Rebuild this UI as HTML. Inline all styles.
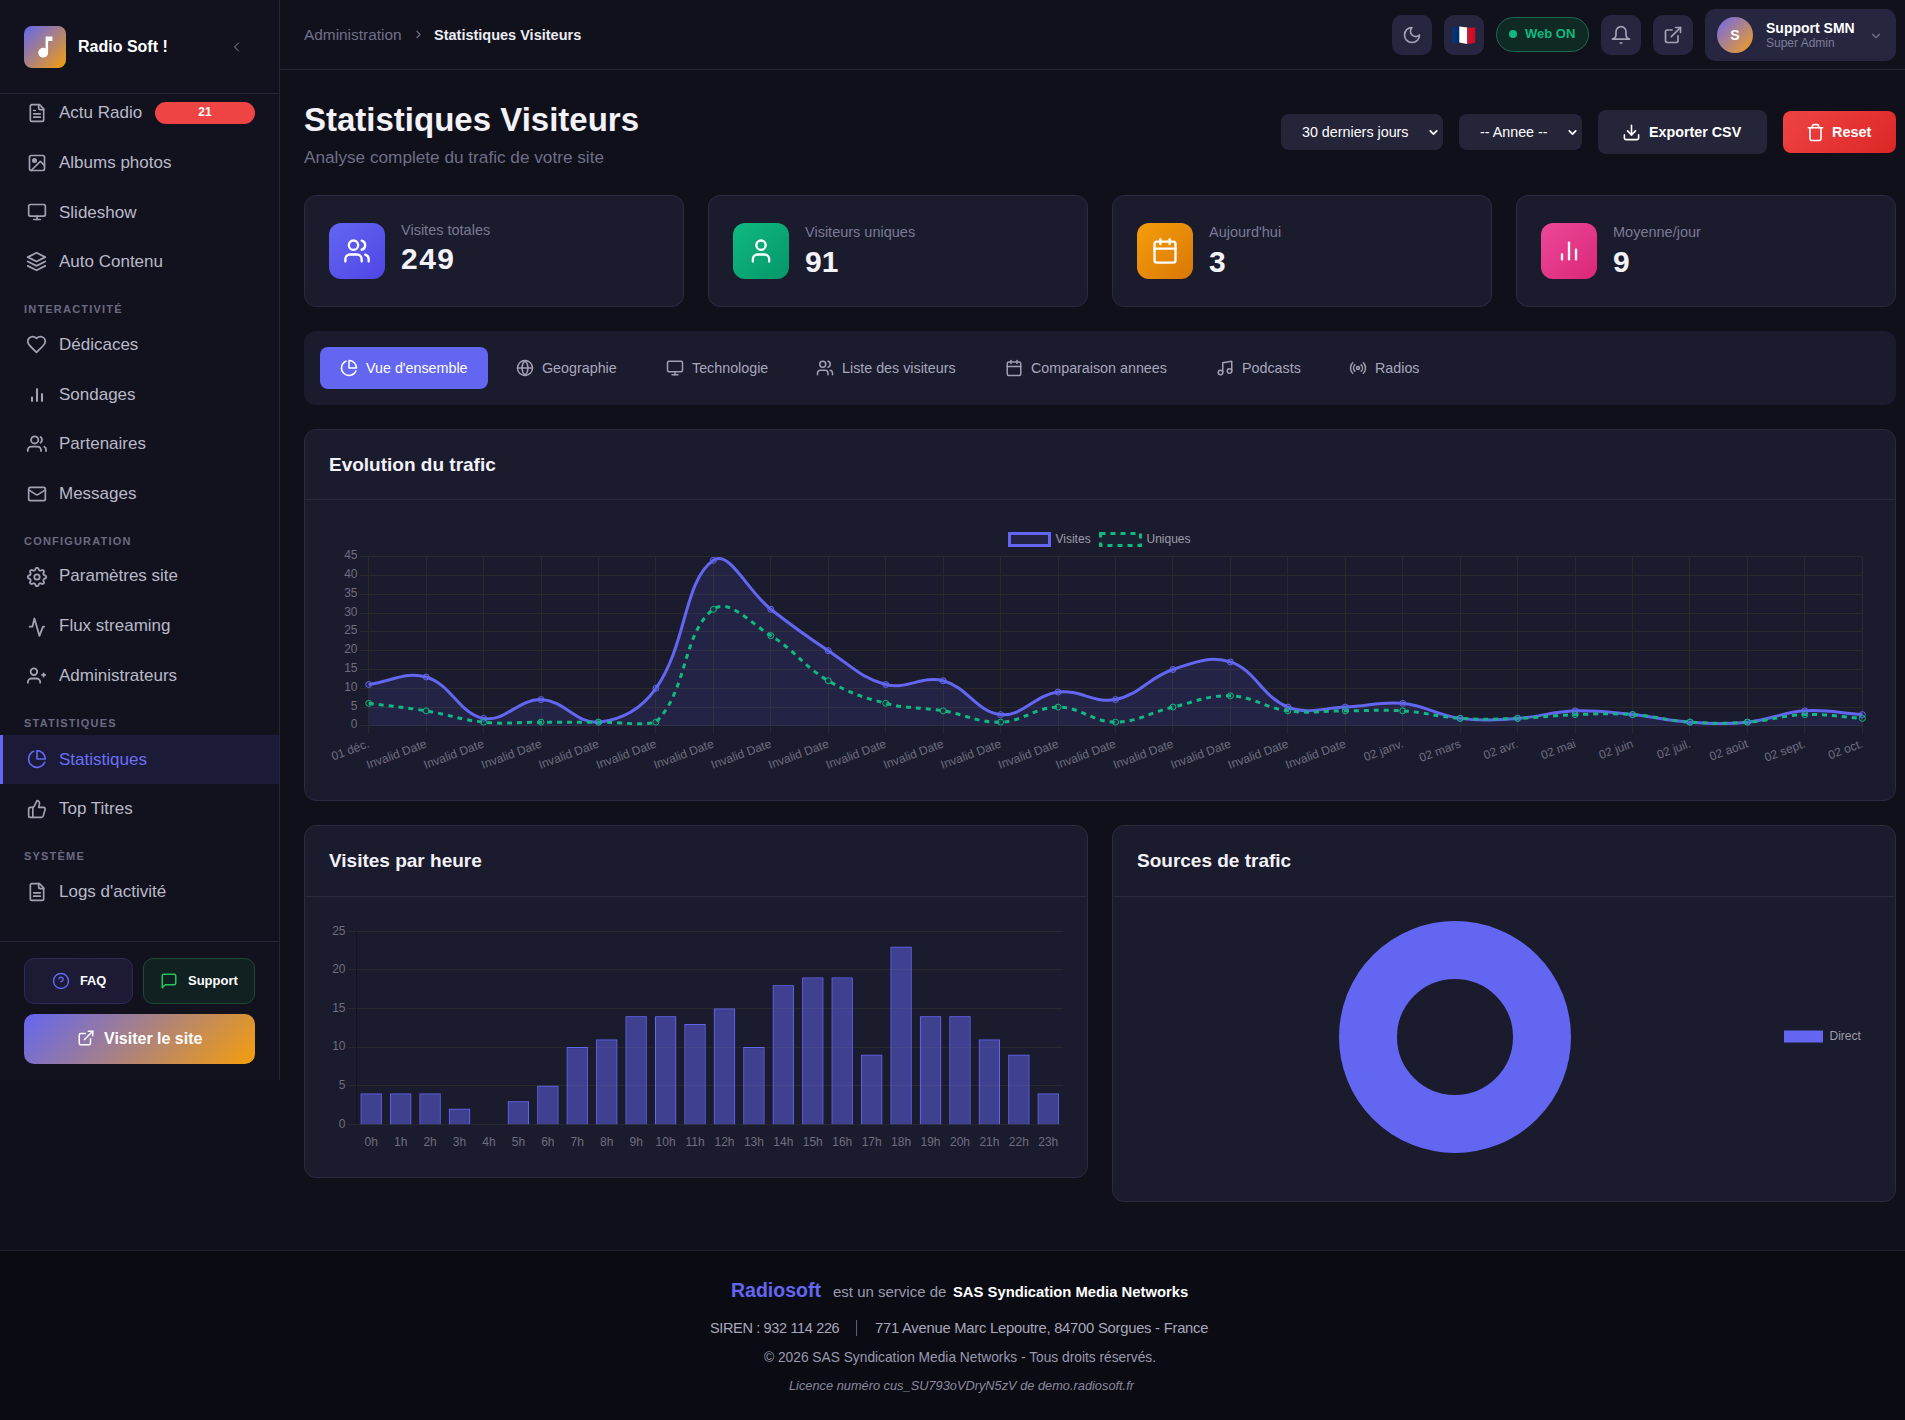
<!DOCTYPE html>
<html lang="fr"><head><meta charset="utf-8"><title>Statistiques Visiteurs</title>
<style>
*{box-sizing:border-box;margin:0;padding:0}
html,body{width:1905px;height:1420px;overflow:hidden;background:#10101b;font-family:"Liberation Sans",sans-serif}
#root{position:relative;width:1905px;height:1420px;overflow:hidden;background:#10101b}
.a{position:absolute}
.t{position:absolute;line-height:1;white-space:nowrap}
svg.i{position:absolute;fill:none;stroke:currentColor;stroke-width:2;stroke-linecap:round;stroke-linejoin:round}
#sb{left:0;top:0;width:280px;height:1080px;background:#12121e;border-right:1px solid #262639}
.nv{left:59px;font-size:17px;color:#b9b9c9}
.ni{color:#a2a2b4;width:22px;height:22px;left:26px}
.sec{left:24px;font-size:11px;font-weight:700;letter-spacing:1.2px;color:#6a6a82}
.hbtn{width:40px;height:40px;top:15px;border-radius:10px;background:#262641}
.card{background:#1b1b2e;border:1px solid #2a2a41;border-radius:12px}
.tk{font-family:"Liberation Sans",sans-serif;font-size:12px;fill:#6e6e7e}
.lg{font-family:"Liberation Sans",sans-serif;font-size:12px;fill:#9d9daa}
.tab{font-size:14.3px;color:#a7a7bb}
.ti{color:#a0a0b2;width:18px;height:18px;top:359px}
</style></head><body><div id="root">

<!-- SIDEBAR -->
<div id="sb" class="a">
  <div class="a" style="left:0;top:93px;width:279px;height:1px;background:#262639"></div>
  <div class="a" style="left:24px;top:26px;width:42px;height:42px;border-radius:8px;background:linear-gradient(135deg,#6366f1 0%,#f59e0b 100%)"></div>
  <svg class="a" style="left:34.5px;top:35px" width="20" height="24" viewBox="0 0 20 24"><path d="M10.6 1.5h6.8v4.6h-4.3v11.6a4.9 4.9 0 1 1-2.5-4.3z" fill="#fff"/></svg>
  <div class="t" style="left:78px;top:39px;font-size:16px;font-weight:700;color:#fff">Radio Soft !</div>
  <svg class="i" style="left:231px;top:41px;color:#8a8aa0" width="12" height="12" viewBox="0 0 24 24"><path d="m15 20-8-8 8-8"/></svg>

  <!-- items -->
  <svg class="i ni" style="top:102.8px;left:26.75px;width:20px;height:20px" viewBox="0 0 24 24"><path d="M15 2H6a2 2 0 0 0-2 2v16a2 2 0 0 0 2 2h12a2 2 0 0 0 2-2V7Z"/><path d="M14 2v4a2 2 0 0 0 2 2h4"/><path d="M10 9H8"/><path d="M16 13H8"/><path d="M16 17H8"/></svg>
  <div class="t nv" style="top:104px">Actu Radio</div>
  <div class="a" style="left:155px;top:102px;width:100px;height:22px;border-radius:11px;background:#ef4444"></div>
  <div class="t" style="left:155px;top:106px;width:100px;text-align:center;font-size:12px;font-weight:700;color:#fff">21</div>

  <svg class="i ni" style="top:153.25px;left:26.75px;width:20px;height:20px" viewBox="0 0 24 24"><rect width="18" height="18" x="3" y="3" rx="2" ry="2"/><circle cx="9" cy="9" r="2" fill="currentColor"/><path d="m21 15-5-5L5 21"/></svg>
  <div class="t nv" style="top:154px">Albums photos</div>

  <svg class="i ni" style="top:202.1px;left:27px;width:20px;height:20px" viewBox="0 0 24 24"><rect width="20" height="14" x="2" y="3" rx="2"/><line x1="8" x2="16" y1="21" y2="21"/><line x1="12" x2="12" y1="17" y2="21"/></svg>
  <div class="t nv" style="top:204px">Slideshow</div>

  <svg class="i ni" style="top:251.4px;left:26.25px;width:21px;height:21px" viewBox="0 0 24 24"><polygon points="12 2 2 7 12 12 22 7 12 2"/><polyline points="2 17 12 22 22 17"/><polyline points="2 12 12 17 22 12"/></svg>
  <div class="t nv" style="top:253px">Auto Contenu</div>

  <div class="t sec" style="top:304px">INTERACTIVITÉ</div>

  <svg class="i ni" style="top:334.4px;left:26.1px;width:21px;height:21px" viewBox="0 0 24 24"><path d="M19 14c1.49-1.46 3-3.21 3-5.5A5.5 5.5 0 0 0 16.5 3c-1.76 0-3 .5-4.5 2-1.5-1.5-2.74-2-4.5-2A5.5 5.5 0 0 0 2 8.5c0 2.3 1.5 4.05 3 5.5l7 7Z"/></svg>
  <div class="t nv" style="top:336px">Dédicaces</div>

  <svg class="i ni" style="top:385.1px;left:26.9px;width:20px;height:20px;stroke-linecap:butt;stroke-width:2.5" viewBox="0 0 24 24"><line x1="18" x2="18" y1="20" y2="10"/><line x1="12" x2="12" y1="20" y2="4"/><line x1="6" x2="6" y1="20" y2="14"/></svg>
  <div class="t nv" style="top:386px">Sondages</div>

  <svg class="i ni" style="top:433px;stroke-width:1.8" viewBox="0 0 22 22"><circle cx="8.7" cy="6.9" r="3.6"/><path d="M14.5 3.9a3.6 3.6 0 0 1 0 5.9"/><path d="M1.8 18.1v-1a3.5 3.5 0 0 1 3.5-3.5h6.2a3.5 3.5 0 0 1 3.5 3.5v1"/><path d="M18.3 13.8a3 3 0 0 1 1.7 3v1.3"/></svg>
  <div class="t nv" style="top:435px">Partenaires</div>

  <svg class="i ni" style="top:483.9px;left:26.8px;width:20px;height:20px" viewBox="0 0 24 24"><rect width="20" height="16" x="2" y="4" rx="2"/><path d="m22 7-8.97 5.7a1.94 1.94 0 0 1-2.06 0L2 7"/></svg>
  <div class="t nv" style="top:485px">Messages</div>

  <div class="t sec" style="top:536px">CONFIGURATION</div>

  <svg class="i ni" style="top:566.2px;stroke-width:1.8" viewBox="0 0 22 22"><path d="M11.00 1.80 L11.48 1.87 L11.94 2.08 L12.35 2.46 L12.63 3.35 L12.91 3.88 L13.20 4.22 L13.51 4.45 L13.85 4.59 L14.24 4.65 L14.69 4.61 L15.26 4.44 L16.08 4.01 L16.64 4.03 L17.12 4.21 L17.51 4.49 L17.79 4.88 L17.97 5.36 L17.99 5.92 L17.56 6.74 L17.39 7.31 L17.35 7.76 L17.41 8.15 L17.55 8.49 L17.78 8.80 L18.12 9.09 L18.65 9.37 L19.54 9.65 L19.92 10.06 L20.13 10.52 L20.20 11.00 L20.13 11.48 L19.92 11.94 L19.54 12.35 L18.65 12.63 L18.12 12.91 L17.78 13.20 L17.55 13.51 L17.41 13.85 L17.35 14.24 L17.39 14.69 L17.56 15.26 L17.99 16.08 L17.97 16.64 L17.79 17.12 L17.51 17.51 L17.12 17.79 L16.64 17.97 L16.08 17.99 L15.26 17.56 L14.69 17.39 L14.24 17.35 L13.85 17.41 L13.51 17.55 L13.20 17.78 L12.91 18.12 L12.63 18.65 L12.35 19.54 L11.94 19.92 L11.48 20.13 L11.00 20.20 L10.52 20.13 L10.06 19.92 L9.65 19.54 L9.37 18.65 L9.09 18.12 L8.80 17.78 L8.49 17.55 L8.15 17.41 L7.76 17.35 L7.31 17.39 L6.74 17.56 L5.92 17.99 L5.36 17.97 L4.88 17.79 L4.49 17.51 L4.21 17.12 L4.03 16.64 L4.01 16.08 L4.44 15.26 L4.61 14.69 L4.65 14.24 L4.59 13.85 L4.45 13.51 L4.22 13.20 L3.88 12.91 L3.35 12.63 L2.46 12.35 L2.08 11.94 L1.87 11.48 L1.80 11.00 L1.87 10.52 L2.08 10.06 L2.46 9.65 L3.35 9.37 L3.88 9.09 L4.22 8.80 L4.45 8.49 L4.59 8.15 L4.65 7.76 L4.61 7.31 L4.44 6.74 L4.01 5.92 L4.03 5.36 L4.21 4.88 L4.49 4.49 L4.88 4.21 L5.36 4.03 L5.92 4.01 L6.74 4.44 L7.31 4.61 L7.76 4.65 L8.15 4.59 L8.49 4.45 L8.80 4.22 L9.09 3.88 L9.37 3.35 L9.65 2.46 L10.06 2.08 L10.52 1.87Z"/><circle cx="11" cy="11" r="2.7"/></svg>
  <div class="t nv" style="top:567px">Paramètres site</div>

  <svg class="i ni" style="top:616px;stroke-width:1.8" viewBox="0 0 22 22"><path d="M3.6 10.7h2.8l2-8.2 5 17.3 3.6-9.1h1.1"/></svg>
  <div class="t nv" style="top:617px">Flux streaming</div>

  <svg class="i ni" style="top:665px;stroke-width:1.8" viewBox="0 0 22 22"><path d="M1.9 17.7v-0.6a3.6 3.6 0 0 1 3.6-3.6h5.1a3.6 3.6 0 0 1 3.6 3.6v0.6"/><circle cx="7.9" cy="6.7" r="3.3"/><path d="M17.6 8.3v3.2M16 9.9h3.2"/></svg>
  <div class="t nv" style="top:667px">Administrateurs</div>

  <div class="t sec" style="top:718px">STATISTIQUES</div>

  <div class="a" style="left:0;top:735px;width:279px;height:49px;background:#1b1b37"></div>
  <div class="a" style="left:0;top:735px;width:3px;height:49px;background:#6366f1"></div>
  <svg class="i ni" style="top:748.9px;left:27.15px;width:20px;height:20px;color:#6366f1" viewBox="0 0 24 24"><path d="M21.21 15.89A10 10 0 1 1 8 2.83"/><path d="M22 12A10 10 0 0 0 12 2v10z"/></svg>
  <div class="t nv" style="top:751px;color:#6b6ff5">Statistiques</div>

  <svg class="i ni" style="top:798.9px;left:26.85px;width:20px;height:20px" viewBox="0 0 24 24"><path d="M7 10v12"/><path d="M15 5.88 14 10h5.83a2 2 0 0 1 1.92 2.56l-2.33 8A2 2 0 0 1 17.5 22H4a2 2 0 0 1-2-2v-8a2 2 0 0 1 2-2h2.76a2 2 0 0 0 1.79-1.11L12 2a3.13 3.13 0 0 1 3 3.88Z"/></svg>
  <div class="t nv" style="top:800px">Top Titres</div>

  <div class="t sec" style="top:851px">SYSTÈME</div>

  <svg class="i ni" style="top:882px;left:27px;width:20px;height:20px" viewBox="0 0 24 24"><path d="M15 2H6a2 2 0 0 0-2 2v16a2 2 0 0 0 2 2h12a2 2 0 0 0 2-2V7Z"/><path d="M14 2v4a2 2 0 0 0 2 2h4"/><path d="M16 13H8"/><path d="M16 17H8"/></svg>
  <div class="t nv" style="top:883px">Logs d'activité</div>

  <div class="a" style="left:0;top:941px;width:279px;height:1px;background:#262639"></div>

  <div class="a" style="left:24px;top:958px;width:109px;height:46px;border-radius:10px;background:linear-gradient(135deg,#1b1b35,#1f1a36);border:1px solid #2d2b55"></div>
  <svg class="i" style="left:52px;top:972px;color:#6366f1;stroke-width:1.9" width="18" height="18" viewBox="0 0 24 24"><circle cx="12" cy="12" r="10"/><path d="M9.09 9a3 3 0 0 1 5.83 1c0 2-3 3-3 3"/></svg>
  <div class="t" style="left:80px;top:975px;font-size:12.8px;font-weight:700;color:#fff">FAQ</div>

  <div class="a" style="left:143px;top:958px;width:112px;height:46px;border-radius:10px;background:#112020;border:1px solid #1d4a33"></div>
  <svg class="i" style="left:160px;top:972px;color:#22c55e" width="18" height="18" viewBox="0 0 24 24"><path d="M21 15a2 2 0 0 1-2 2H7l-4 4V5a2 2 0 0 1 2-2h14a2 2 0 0 1 2 2z"/></svg>
  <div class="t" style="left:188px;top:974px;font-size:13px;font-weight:700;color:#fff">Support</div>

  <div class="a" style="left:24px;top:1014px;width:231px;height:50px;border-radius:10px;background:linear-gradient(135deg,#6366f1 0%,#f59e0b 100%)"></div>
  <svg class="i" style="left:77px;top:1029px;color:#fff" width="18" height="18" viewBox="0 0 24 24"><path d="M15 3h6v6"/><path d="M10 14 21 3"/><path d="M18 13v6a2 2 0 0 1-2 2H5a2 2 0 0 1-2-2V8a2 2 0 0 1 2-2h6"/></svg>
  <div class="t" style="left:104px;top:1031px;font-size:16px;font-weight:700;color:#fff">Visiter le site</div>
</div>

<!-- HEADER -->
<div class="a" style="left:280px;top:0;width:1625px;height:70px;background:#11111c;border-bottom:1px solid #262639"></div>
<div class="t" style="left:304px;top:27px;font-size:15.4px;color:#70708a">Administration</div>
<svg class="i" style="left:412px;top:28px;color:#70708a" width="13" height="13" viewBox="0 0 24 24"><path d="m9 18 6-6-6-6"/></svg>
<div class="t" style="left:434px;top:28px;font-size:14.5px;font-weight:700;color:#ececf4">Statistiques Visiteurs</div>

<div class="a hbtn" style="left:1392px"></div>
<svg class="i" style="left:1402px;top:25px;color:#a3a3b5" width="20" height="20" viewBox="0 0 24 24"><path d="M12 3a6 6 0 0 0 9 9 9 9 0 1 1-9-9Z"/></svg>
<div class="a hbtn" style="left:1444px"></div>
<svg class="a" style="left:1451px;top:25px" width="26" height="20" viewBox="0 0 26 20"><defs><linearGradient id="fb" x1="0" x2="1"><stop offset="0" stop-color="#003a7c"/><stop offset="1" stop-color="#002a66"/></linearGradient><linearGradient id="fr" x1="0" x2="1"><stop offset="0" stop-color="#d8142c"/><stop offset="1" stop-color="#c20c22"/></linearGradient></defs><path d="M1.5 2.6 Q5 1.6 8.3 1.4 L8.3 17.4 Q5 17.6 1.5 18.4Z" fill="url(#fb)"/><path d="M8.3 1.4 Q12 1.6 16.3 2.6 L16.3 19 Q12 18 8.3 17.4Z" fill="#fff"/><path d="M16.3 2.6 Q20.5 3 24.3 2.2 L24.3 17.8 Q20.5 18.8 16.3 19Z" fill="url(#fr)"/></svg>
<div class="a" style="left:1496px;top:17px;width:93px;height:35px;border-radius:18px;background:#0f2a24;border:1px solid #1b6a4f"></div>
<div class="a" style="left:1509px;top:30px;width:8px;height:8px;border-radius:4px;background:#10b981"></div>
<div class="t" style="left:1525px;top:27px;font-size:13px;font-weight:700;color:#10b981">Web ON</div>
<div class="a hbtn" style="left:1601px"></div>
<svg class="i" style="left:1611px;top:25px;color:#a3a3b5" width="20" height="20" viewBox="0 0 24 24"><path d="M6 8a6 6 0 0 1 12 0v3.5c0 3 1.8 4.8 4.2 5.5H1.8C4.2 16.3 6 14.5 6 11.5Z"/><path d="M11 21.6h2"/></svg>
<div class="a hbtn" style="left:1653px"></div>
<svg class="i" style="left:1663px;top:25px;color:#a3a3b5" width="20" height="20" viewBox="0 0 24 24"><path d="M15 3h6v6"/><path d="M10 14 21 3"/><path d="M18 13v6a2 2 0 0 1-2 2H5a2 2 0 0 1-2-2V8a2 2 0 0 1 2-2h6"/></svg>
<div class="a" style="left:1705px;top:9px;width:191px;height:52px;border-radius:10px;background:#262641"></div>
<div class="a" style="left:1717px;top:17px;width:36px;height:36px;border-radius:18px;background:linear-gradient(135deg,#6b68f0 0%,#f5a01a 100%)"></div>
<div class="t" style="left:1717px;top:28px;width:36px;text-align:center;font-size:14px;font-weight:700;color:#fff">S</div>
<div class="t" style="left:1766px;top:21px;font-size:14px;font-weight:700;color:#fff">Support SMN</div>
<div class="t" style="left:1766px;top:37px;font-size:12px;color:#7d7d95">Super Admin</div>
<svg class="i" style="left:1869px;top:29px;color:#74748a" width="14" height="14" viewBox="0 0 24 24"><path d="m6 9 6 6 6-6"/></svg>

<!-- PAGE HEAD -->
<div class="t" style="left:304px;top:103px;font-size:33px;font-weight:700;color:#f2f2f8">Statistiques Visiteurs</div>
<div class="t" style="left:304px;top:149px;font-size:17.2px;color:#6e6e88">Analyse complete du trafic de votre site</div>

<div class="a" style="left:1281px;top:114px;width:162px;height:36px;border-radius:8px;background:#252539"></div>
<div class="t" style="left:1302px;top:125px;font-size:14.3px;color:#fff">30 derniers jours</div>
<svg class="i" style="left:1427px;top:126px;color:#fff;stroke-width:3.2" width="13" height="13" viewBox="0 0 24 24"><path d="m6 9 6 6 6-6"/></svg>
<div class="a" style="left:1459px;top:114px;width:123px;height:36px;border-radius:8px;background:#252539"></div>
<div class="t" style="left:1480px;top:125px;font-size:14.3px;color:#fff">-- Annee --</div>
<svg class="i" style="left:1566px;top:126px;color:#fff;stroke-width:3.2" width="13" height="13" viewBox="0 0 24 24"><path d="m6 9 6 6 6-6"/></svg>

<div class="a" style="left:1598px;top:110px;width:169px;height:44px;border-radius:8px;background:#252539"></div>
<svg class="i" style="left:1622px;top:123px;color:#fff" width="19" height="19" viewBox="0 0 24 24"><path d="M21 15v4a2 2 0 0 1-2 2H5a2 2 0 0 1-2-2v-4"/><polyline points="7 10 12 15 17 10"/><line x1="12" x2="12" y1="15" y2="3"/></svg>
<div class="t" style="left:1649px;top:125px;font-size:14.3px;font-weight:700;color:#fff">Exporter CSV</div>
<div class="a" style="left:1783px;top:111px;width:113px;height:42px;border-radius:8px;background:linear-gradient(135deg,#ef4444,#dc2626)"></div>
<svg class="i" style="left:1806px;top:123px;color:#fff" width="19" height="19" viewBox="0 0 24 24"><path d="M3 6h18"/><path d="M19 6v14c0 1-1 2-2 2H7c-1 0-2-1-2-2V6"/><path d="M8 6V4c0-1 1-2 2-2h4c1 0 2 1 2 2v2"/></svg>
<div class="t" style="left:1832px;top:125px;font-size:14.4px;font-weight:700;color:#fff">Reset</div>

<!-- STAT CARDS -->
<div class="a card" style="left:304px;top:195px;width:380px;height:112px"></div>
<div class="a" style="left:329px;top:223px;width:56px;height:56px;border-radius:12px;background:linear-gradient(135deg,#6366f1,#4f46e5)"></div>
<svg class="i" style="left:343px;top:237px;color:#fff" width="28" height="28" viewBox="0 0 24 24"><path d="M16 21v-2a4 4 0 0 0-4-4H6a4 4 0 0 0-4 4v2"/><circle cx="9" cy="7" r="4"/><path d="M22 21v-2a4 4 0 0 0-3-3.87"/><path d="M16 3.13a4 4 0 0 1 0 7.75"/></svg>
<div class="t" style="left:401px;top:223px;font-size:14.5px;color:#7a7a92">Visites totales</div>
<div class="t" style="left:401px;top:244px;font-size:30px;font-weight:700;letter-spacing:1.5px;color:#f2f2f8">249</div>

<div class="a card" style="left:708px;top:195px;width:380px;height:112px"></div>
<div class="a" style="left:733px;top:223px;width:56px;height:56px;border-radius:12px;background:linear-gradient(135deg,#10b981,#059669)"></div>
<svg class="i" style="left:747px;top:237px;color:#fff" width="28" height="28" viewBox="0 0 24 24"><path d="M19 21v-2a4 4 0 0 0-4-4H9a4 4 0 0 0-4 4v2"/><circle cx="12" cy="7" r="4"/></svg>
<div class="t" style="left:805px;top:225px;font-size:14.5px;color:#7a7a92">Visiteurs uniques</div>
<div class="t" style="left:805px;top:247px;font-size:30px;font-weight:700;color:#f2f2f8">91</div>

<div class="a card" style="left:1112px;top:195px;width:380px;height:112px"></div>
<div class="a" style="left:1137px;top:223px;width:56px;height:56px;border-radius:12px;background:linear-gradient(135deg,#f59e0b,#d97706)"></div>
<svg class="i" style="left:1151px;top:237px;color:#fff" width="28" height="28" viewBox="0 0 24 24"><rect width="18" height="18" x="3" y="4" rx="2" ry="2"/><line x1="16" x2="16" y1="2" y2="6"/><line x1="8" x2="8" y1="2" y2="6"/><line x1="3" x2="21" y1="10" y2="10"/></svg>
<div class="t" style="left:1209px;top:225px;font-size:14.5px;color:#7a7a92">Aujourd'hui</div>
<div class="t" style="left:1209px;top:247px;font-size:30px;font-weight:700;color:#f2f2f8">3</div>

<div class="a card" style="left:1516px;top:195px;width:380px;height:112px"></div>
<div class="a" style="left:1541px;top:223px;width:56px;height:56px;border-radius:12px;background:linear-gradient(135deg,#ec4899,#db2777)"></div>
<svg class="i" style="left:1555px;top:237px;color:#fff;stroke-linecap:butt" width="28" height="28" viewBox="0 0 24 24"><line x1="18" x2="18" y1="20" y2="10"/><line x1="12" x2="12" y1="20" y2="4"/><line x1="6" x2="6" y1="20" y2="14"/></svg>
<div class="t" style="left:1613px;top:225px;font-size:14.5px;color:#7a7a92">Moyenne/jour</div>
<div class="t" style="left:1613px;top:247px;font-size:30px;font-weight:700;color:#f2f2f8">9</div>

<!-- TABS -->
<div class="a" style="left:304px;top:331px;width:1592px;height:74px;border-radius:12px;background:#1b1b2e"></div>
<div class="a" style="left:320px;top:347px;width:168px;height:42px;border-radius:8px;background:#6366f1"></div>
<svg class="i ti" style="left:340px;color:#fff" viewBox="0 0 24 24"><path d="M21.21 15.89A10 10 0 1 1 8 2.83"/><path d="M22 12A10 10 0 0 0 12 2v10z"/></svg>
<div class="t tab" style="left:366px;top:361px;color:#fff">Vue d'ensemble</div>
<svg class="i ti" style="left:516px" viewBox="0 0 24 24"><circle cx="12" cy="12" r="10"/><path d="M12 2a14.5 14.5 0 0 0 0 20 14.5 14.5 0 0 0 0-20"/><path d="M2 12h20"/></svg>
<div class="t tab" style="left:542px;top:361px">Geographie</div>
<svg class="i ti" style="left:666px" viewBox="0 0 24 24"><rect width="20" height="14" x="2" y="3" rx="2"/><line x1="8" x2="16" y1="21" y2="21"/><line x1="12" x2="12" y1="17" y2="21"/></svg>
<div class="t tab" style="left:692px;top:361px">Technologie</div>
<svg class="i ti" style="left:816px" viewBox="0 0 24 24"><path d="M16 21v-2a4 4 0 0 0-4-4H6a4 4 0 0 0-4 4v2"/><circle cx="9" cy="7" r="4"/><path d="M22 21v-2a4 4 0 0 0-3-3.87"/><path d="M16 3.13a4 4 0 0 1 0 7.75"/></svg>
<div class="t tab" style="left:842px;top:361px">Liste des visiteurs</div>
<svg class="i ti" style="left:1005px" viewBox="0 0 24 24"><rect width="18" height="18" x="3" y="4" rx="2"/><line x1="16" x2="16" y1="2" y2="6"/><line x1="8" x2="8" y1="2" y2="6"/><line x1="3" x2="21" y1="10" y2="10"/></svg>
<div class="t tab" style="left:1031px;top:361px">Comparaison annees</div>
<svg class="i ti" style="left:1216px" viewBox="0 0 24 24"><path d="M9 18V5l12-2v13"/><circle cx="6" cy="18" r="3"/><circle cx="18" cy="16" r="3"/></svg>
<div class="t tab" style="left:1242px;top:361px">Podcasts</div>
<svg class="i ti" style="left:1349px" viewBox="0 0 24 24"><path d="M4.9 19.1C1 15.2 1 8.8 4.9 4.9"/><path d="M7.8 16.2c-2.3-2.3-2.3-6.1 0-8.5"/><circle cx="12" cy="12" r="2"/><path d="M16.2 7.8c2.3 2.3 2.3 6.1 0 8.5"/><path d="M19.1 4.9C23 8.8 23 15.1 19.1 19"/></svg>
<div class="t tab" style="left:1375px;top:361px">Radios</div>

<!-- EVOLUTION CARD -->
<div class="a card" style="left:304px;top:429px;width:1592px;height:372px"></div>
<div class="a" style="left:305px;top:499px;width:1590px;height:1px;background:#2a2a41"></div>
<div class="t" style="left:329px;top:455px;font-size:19px;font-weight:700;color:#f2f2f8">Evolution du trafic</div>

<!-- BAR CARD -->
<div class="a card" style="left:304px;top:825px;width:784px;height:353px"></div>
<div class="a" style="left:305px;top:896px;width:782px;height:1px;background:#2a2a41"></div>
<div class="t" style="left:329px;top:851px;font-size:19px;font-weight:700;color:#f2f2f8">Visites par heure</div>

<!-- DONUT CARD -->
<div class="a card" style="left:1112px;top:825px;width:784px;height:377px"></div>
<div class="a" style="left:1113px;top:896px;width:782px;height:1px;background:#2a2a41"></div>
<div class="t" style="left:1137px;top:851px;font-size:19px;font-weight:700;color:#f2f2f8">Sources de trafic</div>

<svg class="a" style="left:0;top:0" width="1905" height="1420" viewBox="0 0 1905 1420">
<line x1="360" x2="1862.8" y1="725.5" y2="725.5" stroke="#29282c" stroke-width="1"/>
<line x1="360" x2="1862.8" y1="707.5" y2="707.5" stroke="#29282c" stroke-width="1"/>
<line x1="360" x2="1862.8" y1="688.5" y2="688.5" stroke="#29282c" stroke-width="1"/>
<line x1="360" x2="1862.8" y1="669.5" y2="669.5" stroke="#29282c" stroke-width="1"/>
<line x1="360" x2="1862.8" y1="650.5" y2="650.5" stroke="#29282c" stroke-width="1"/>
<line x1="360" x2="1862.8" y1="631.5" y2="631.5" stroke="#29282c" stroke-width="1"/>
<line x1="360" x2="1862.8" y1="613.5" y2="613.5" stroke="#29282c" stroke-width="1"/>
<line x1="360" x2="1862.8" y1="594.5" y2="594.5" stroke="#29282c" stroke-width="1"/>
<line x1="360" x2="1862.8" y1="575.5" y2="575.5" stroke="#29282c" stroke-width="1"/>
<line x1="360" x2="1862.8" y1="556.5" y2="556.5" stroke="#29282c" stroke-width="1"/>
<line x1="368.5" x2="368.5" y1="556.6" y2="733.5" stroke="#29282c" stroke-width="1"/>
<line x1="426.5" x2="426.5" y1="556.6" y2="733.5" stroke="#29282c" stroke-width="1"/>
<line x1="483.5" x2="483.5" y1="556.6" y2="733.5" stroke="#29282c" stroke-width="1"/>
<line x1="541.5" x2="541.5" y1="556.6" y2="733.5" stroke="#29282c" stroke-width="1"/>
<line x1="598.5" x2="598.5" y1="556.6" y2="733.5" stroke="#29282c" stroke-width="1"/>
<line x1="655.5" x2="655.5" y1="556.6" y2="733.5" stroke="#29282c" stroke-width="1"/>
<line x1="713.5" x2="713.5" y1="556.6" y2="733.5" stroke="#29282c" stroke-width="1"/>
<line x1="770.5" x2="770.5" y1="556.6" y2="733.5" stroke="#29282c" stroke-width="1"/>
<line x1="828.5" x2="828.5" y1="556.6" y2="733.5" stroke="#29282c" stroke-width="1"/>
<line x1="885.5" x2="885.5" y1="556.6" y2="733.5" stroke="#29282c" stroke-width="1"/>
<line x1="943.5" x2="943.5" y1="556.6" y2="733.5" stroke="#29282c" stroke-width="1"/>
<line x1="1000.5" x2="1000.5" y1="556.6" y2="733.5" stroke="#29282c" stroke-width="1"/>
<line x1="1058.5" x2="1058.5" y1="556.6" y2="733.5" stroke="#29282c" stroke-width="1"/>
<line x1="1115.5" x2="1115.5" y1="556.6" y2="733.5" stroke="#29282c" stroke-width="1"/>
<line x1="1172.5" x2="1172.5" y1="556.6" y2="733.5" stroke="#29282c" stroke-width="1"/>
<line x1="1230.5" x2="1230.5" y1="556.6" y2="733.5" stroke="#29282c" stroke-width="1"/>
<line x1="1287.5" x2="1287.5" y1="556.6" y2="733.5" stroke="#29282c" stroke-width="1"/>
<line x1="1345.5" x2="1345.5" y1="556.6" y2="733.5" stroke="#29282c" stroke-width="1"/>
<line x1="1402.5" x2="1402.5" y1="556.6" y2="733.5" stroke="#29282c" stroke-width="1"/>
<line x1="1460.5" x2="1460.5" y1="556.6" y2="733.5" stroke="#29282c" stroke-width="1"/>
<line x1="1517.5" x2="1517.5" y1="556.6" y2="733.5" stroke="#29282c" stroke-width="1"/>
<line x1="1575.5" x2="1575.5" y1="556.6" y2="733.5" stroke="#29282c" stroke-width="1"/>
<line x1="1632.5" x2="1632.5" y1="556.6" y2="733.5" stroke="#29282c" stroke-width="1"/>
<line x1="1689.5" x2="1689.5" y1="556.6" y2="733.5" stroke="#29282c" stroke-width="1"/>
<line x1="1747.5" x2="1747.5" y1="556.6" y2="733.5" stroke="#29282c" stroke-width="1"/>
<line x1="1804.5" x2="1804.5" y1="556.6" y2="733.5" stroke="#29282c" stroke-width="1"/>
<line x1="1862.5" x2="1862.5" y1="556.6" y2="733.5" stroke="#29282c" stroke-width="1"/>
<text x="357.5" y="724.40" text-anchor="end" dominant-baseline="central" class="tk">0</text>
<text x="357.5" y="705.59" text-anchor="end" dominant-baseline="central" class="tk">5</text>
<text x="357.5" y="686.78" text-anchor="end" dominant-baseline="central" class="tk">10</text>
<text x="357.5" y="667.97" text-anchor="end" dominant-baseline="central" class="tk">15</text>
<text x="357.5" y="649.16" text-anchor="end" dominant-baseline="central" class="tk">20</text>
<text x="357.5" y="630.34" text-anchor="end" dominant-baseline="central" class="tk">25</text>
<text x="357.5" y="611.53" text-anchor="end" dominant-baseline="central" class="tk">30</text>
<text x="357.5" y="592.72" text-anchor="end" dominant-baseline="central" class="tk">35</text>
<text x="357.5" y="573.91" text-anchor="end" dominant-baseline="central" class="tk">40</text>
<text x="357.5" y="555.10" text-anchor="end" dominant-baseline="central" class="tk">45</text>
<text transform="translate(368.70 736) rotate(-20.5)" x="-2.5" y="6.6" text-anchor="end" dominant-baseline="central" class="tk">01 déc.</text>
<text transform="translate(426.15 736) rotate(-20.5)" x="-2.5" y="6.6" text-anchor="end" dominant-baseline="central" class="tk">Invalid Date</text>
<text transform="translate(483.59 736) rotate(-20.5)" x="-2.5" y="6.6" text-anchor="end" dominant-baseline="central" class="tk">Invalid Date</text>
<text transform="translate(541.04 736) rotate(-20.5)" x="-2.5" y="6.6" text-anchor="end" dominant-baseline="central" class="tk">Invalid Date</text>
<text transform="translate(598.48 736) rotate(-20.5)" x="-2.5" y="6.6" text-anchor="end" dominant-baseline="central" class="tk">Invalid Date</text>
<text transform="translate(655.93 736) rotate(-20.5)" x="-2.5" y="6.6" text-anchor="end" dominant-baseline="central" class="tk">Invalid Date</text>
<text transform="translate(713.38 736) rotate(-20.5)" x="-2.5" y="6.6" text-anchor="end" dominant-baseline="central" class="tk">Invalid Date</text>
<text transform="translate(770.82 736) rotate(-20.5)" x="-2.5" y="6.6" text-anchor="end" dominant-baseline="central" class="tk">Invalid Date</text>
<text transform="translate(828.27 736) rotate(-20.5)" x="-2.5" y="6.6" text-anchor="end" dominant-baseline="central" class="tk">Invalid Date</text>
<text transform="translate(885.72 736) rotate(-20.5)" x="-2.5" y="6.6" text-anchor="end" dominant-baseline="central" class="tk">Invalid Date</text>
<text transform="translate(943.16 736) rotate(-20.5)" x="-2.5" y="6.6" text-anchor="end" dominant-baseline="central" class="tk">Invalid Date</text>
<text transform="translate(1000.61 736) rotate(-20.5)" x="-2.5" y="6.6" text-anchor="end" dominant-baseline="central" class="tk">Invalid Date</text>
<text transform="translate(1058.05 736) rotate(-20.5)" x="-2.5" y="6.6" text-anchor="end" dominant-baseline="central" class="tk">Invalid Date</text>
<text transform="translate(1115.50 736) rotate(-20.5)" x="-2.5" y="6.6" text-anchor="end" dominant-baseline="central" class="tk">Invalid Date</text>
<text transform="translate(1172.95 736) rotate(-20.5)" x="-2.5" y="6.6" text-anchor="end" dominant-baseline="central" class="tk">Invalid Date</text>
<text transform="translate(1230.39 736) rotate(-20.5)" x="-2.5" y="6.6" text-anchor="end" dominant-baseline="central" class="tk">Invalid Date</text>
<text transform="translate(1287.84 736) rotate(-20.5)" x="-2.5" y="6.6" text-anchor="end" dominant-baseline="central" class="tk">Invalid Date</text>
<text transform="translate(1345.28 736) rotate(-20.5)" x="-2.5" y="6.6" text-anchor="end" dominant-baseline="central" class="tk">Invalid Date</text>
<text transform="translate(1402.73 736) rotate(-20.5)" x="-2.5" y="6.6" text-anchor="end" dominant-baseline="central" class="tk">02 janv.</text>
<text transform="translate(1460.18 736) rotate(-20.5)" x="-2.5" y="6.6" text-anchor="end" dominant-baseline="central" class="tk">02 mars</text>
<text transform="translate(1517.62 736) rotate(-20.5)" x="-2.5" y="6.6" text-anchor="end" dominant-baseline="central" class="tk">02 avr.</text>
<text transform="translate(1575.07 736) rotate(-20.5)" x="-2.5" y="6.6" text-anchor="end" dominant-baseline="central" class="tk">02 mai</text>
<text transform="translate(1632.52 736) rotate(-20.5)" x="-2.5" y="6.6" text-anchor="end" dominant-baseline="central" class="tk">02 juin</text>
<text transform="translate(1689.96 736) rotate(-20.5)" x="-2.5" y="6.6" text-anchor="end" dominant-baseline="central" class="tk">02 juil.</text>
<text transform="translate(1747.41 736) rotate(-20.5)" x="-2.5" y="6.6" text-anchor="end" dominant-baseline="central" class="tk">02 août</text>
<text transform="translate(1804.85 736) rotate(-20.5)" x="-2.5" y="6.6" text-anchor="end" dominant-baseline="central" class="tk">02 sept.</text>
<text transform="translate(1862.30 736) rotate(-20.5)" x="-2.5" y="6.6" text-anchor="end" dominant-baseline="central" class="tk">02 oct.</text>
<path d="M368.70 684.52 C391.68 681.51 405.46 670.90 426.15 676.99 C451.42 684.44 458.80 713.50 483.59 718.38 C504.76 722.53 518.30 698.82 541.04 699.56 C564.26 700.32 576.39 724.31 598.48 722.14 C622.35 719.79 641.12 709.13 655.93 688.28 C687.08 644.42 683.50 580.91 713.38 560.36 C729.45 549.31 747.11 590.64 770.82 609.27 C793.07 626.76 804.60 635.16 828.27 650.66 C850.56 665.25 861.05 678.05 885.72 684.52 C907.01 690.09 921.87 675.18 943.16 680.75 C967.83 687.21 976.74 712.27 1000.61 714.61 C1022.70 716.78 1034.35 695.14 1058.05 692.04 C1080.31 689.13 1093.82 703.82 1115.50 699.56 C1139.77 694.80 1148.67 677.41 1172.95 669.47 C1194.63 662.37 1210.07 655.29 1230.39 661.94 C1256.02 670.34 1262.11 696.98 1287.84 707.09 C1308.07 715.04 1322.33 707.84 1345.28 707.09 C1368.29 706.34 1380.11 701.10 1402.73 703.33 C1426.07 705.62 1436.82 715.32 1460.18 718.38 C1482.77 721.34 1494.74 719.87 1517.62 718.38 C1540.70 716.86 1552.02 711.61 1575.07 710.85 C1597.97 710.10 1609.61 712.36 1632.52 714.61 C1655.57 716.88 1666.89 720.63 1689.96 722.14 C1712.84 723.64 1724.65 724.37 1747.41 722.14 C1770.60 719.86 1781.68 712.37 1804.85 710.85 C1827.64 709.36 1839.32 713.11 1862.30 714.61 L1862.30 725.9 L368.70 725.9 Z" fill="rgba(99,102,241,0.12)"/>
<path d="M368.70 684.52 C391.68 681.51 405.46 670.90 426.15 676.99 C451.42 684.44 458.80 713.50 483.59 718.38 C504.76 722.53 518.30 698.82 541.04 699.56 C564.26 700.32 576.39 724.31 598.48 722.14 C622.35 719.79 641.12 709.13 655.93 688.28 C687.08 644.42 683.50 580.91 713.38 560.36 C729.45 549.31 747.11 590.64 770.82 609.27 C793.07 626.76 804.60 635.16 828.27 650.66 C850.56 665.25 861.05 678.05 885.72 684.52 C907.01 690.09 921.87 675.18 943.16 680.75 C967.83 687.21 976.74 712.27 1000.61 714.61 C1022.70 716.78 1034.35 695.14 1058.05 692.04 C1080.31 689.13 1093.82 703.82 1115.50 699.56 C1139.77 694.80 1148.67 677.41 1172.95 669.47 C1194.63 662.37 1210.07 655.29 1230.39 661.94 C1256.02 670.34 1262.11 696.98 1287.84 707.09 C1308.07 715.04 1322.33 707.84 1345.28 707.09 C1368.29 706.34 1380.11 701.10 1402.73 703.33 C1426.07 705.62 1436.82 715.32 1460.18 718.38 C1482.77 721.34 1494.74 719.87 1517.62 718.38 C1540.70 716.86 1552.02 711.61 1575.07 710.85 C1597.97 710.10 1609.61 712.36 1632.52 714.61 C1655.57 716.88 1666.89 720.63 1689.96 722.14 C1712.84 723.64 1724.65 724.37 1747.41 722.14 C1770.60 719.86 1781.68 712.37 1804.85 710.85 C1827.64 709.36 1839.32 713.11 1862.30 714.61" fill="none" stroke="#6366f1" stroke-width="3" stroke-linejoin="round"/>
<path d="M368.70 703.33 C391.68 706.34 403.29 707.11 426.15 710.85 C449.24 714.63 460.40 719.86 483.59 722.14 C506.35 724.37 518.06 722.14 541.04 722.14 C564.02 722.14 575.51 722.14 598.48 722.14 C621.46 722.14 641.59 725.90 655.93 722.14 C687.55 691.08 682.72 632.36 713.38 609.27 C728.68 597.75 749.51 622.35 770.82 635.61 C795.47 650.94 803.36 666.07 828.27 680.75 C849.31 693.16 862.01 697.12 885.72 703.33 C907.97 709.16 920.30 707.11 943.16 710.85 C966.26 714.63 977.79 722.88 1000.61 722.14 C1023.75 721.38 1035.08 707.09 1058.05 707.09 C1081.03 707.09 1092.52 722.14 1115.50 722.14 C1138.48 722.14 1149.80 712.39 1172.95 707.09 C1195.76 701.86 1207.58 695.06 1230.39 695.80 C1253.53 696.56 1264.48 707.79 1287.84 710.85 C1310.44 713.81 1322.31 710.85 1345.28 710.85 C1368.26 710.85 1379.85 709.35 1402.73 710.85 C1425.81 712.36 1437.10 716.86 1460.18 718.38 C1483.06 719.87 1494.67 719.13 1517.62 718.38 C1540.63 717.62 1552.07 715.37 1575.07 714.61 C1598.02 713.86 1609.63 713.11 1632.52 714.61 C1655.59 716.12 1666.89 720.63 1689.96 722.14 C1712.84 723.64 1724.53 723.64 1747.41 722.14 C1770.48 720.63 1781.80 715.37 1804.85 714.61 C1827.76 713.86 1839.32 716.87 1862.30 718.38" fill="none" stroke="#10b981" stroke-width="3" stroke-dasharray="5 5" stroke-linejoin="round"/>
<circle cx="368.70" cy="684.52" r="3" fill="rgba(99,102,241,0.12)" stroke="#6366f1" stroke-width="1"/>
<circle cx="426.15" cy="676.99" r="3" fill="rgba(99,102,241,0.12)" stroke="#6366f1" stroke-width="1"/>
<circle cx="483.59" cy="718.38" r="3" fill="rgba(99,102,241,0.12)" stroke="#6366f1" stroke-width="1"/>
<circle cx="541.04" cy="699.56" r="3" fill="rgba(99,102,241,0.12)" stroke="#6366f1" stroke-width="1"/>
<circle cx="598.48" cy="722.14" r="3" fill="rgba(99,102,241,0.12)" stroke="#6366f1" stroke-width="1"/>
<circle cx="655.93" cy="688.28" r="3" fill="rgba(99,102,241,0.12)" stroke="#6366f1" stroke-width="1"/>
<circle cx="713.38" cy="560.36" r="3" fill="rgba(99,102,241,0.12)" stroke="#6366f1" stroke-width="1"/>
<circle cx="770.82" cy="609.27" r="3" fill="rgba(99,102,241,0.12)" stroke="#6366f1" stroke-width="1"/>
<circle cx="828.27" cy="650.66" r="3" fill="rgba(99,102,241,0.12)" stroke="#6366f1" stroke-width="1"/>
<circle cx="885.72" cy="684.52" r="3" fill="rgba(99,102,241,0.12)" stroke="#6366f1" stroke-width="1"/>
<circle cx="943.16" cy="680.75" r="3" fill="rgba(99,102,241,0.12)" stroke="#6366f1" stroke-width="1"/>
<circle cx="1000.61" cy="714.61" r="3" fill="rgba(99,102,241,0.12)" stroke="#6366f1" stroke-width="1"/>
<circle cx="1058.05" cy="692.04" r="3" fill="rgba(99,102,241,0.12)" stroke="#6366f1" stroke-width="1"/>
<circle cx="1115.50" cy="699.56" r="3" fill="rgba(99,102,241,0.12)" stroke="#6366f1" stroke-width="1"/>
<circle cx="1172.95" cy="669.47" r="3" fill="rgba(99,102,241,0.12)" stroke="#6366f1" stroke-width="1"/>
<circle cx="1230.39" cy="661.94" r="3" fill="rgba(99,102,241,0.12)" stroke="#6366f1" stroke-width="1"/>
<circle cx="1287.84" cy="707.09" r="3" fill="rgba(99,102,241,0.12)" stroke="#6366f1" stroke-width="1"/>
<circle cx="1345.28" cy="707.09" r="3" fill="rgba(99,102,241,0.12)" stroke="#6366f1" stroke-width="1"/>
<circle cx="1402.73" cy="703.33" r="3" fill="rgba(99,102,241,0.12)" stroke="#6366f1" stroke-width="1"/>
<circle cx="1460.18" cy="718.38" r="3" fill="rgba(99,102,241,0.12)" stroke="#6366f1" stroke-width="1"/>
<circle cx="1517.62" cy="718.38" r="3" fill="rgba(99,102,241,0.12)" stroke="#6366f1" stroke-width="1"/>
<circle cx="1575.07" cy="710.85" r="3" fill="rgba(99,102,241,0.12)" stroke="#6366f1" stroke-width="1"/>
<circle cx="1632.52" cy="714.61" r="3" fill="rgba(99,102,241,0.12)" stroke="#6366f1" stroke-width="1"/>
<circle cx="1689.96" cy="722.14" r="3" fill="rgba(99,102,241,0.12)" stroke="#6366f1" stroke-width="1"/>
<circle cx="1747.41" cy="722.14" r="3" fill="rgba(99,102,241,0.12)" stroke="#6366f1" stroke-width="1"/>
<circle cx="1804.85" cy="710.85" r="3" fill="rgba(99,102,241,0.12)" stroke="#6366f1" stroke-width="1"/>
<circle cx="1862.30" cy="714.61" r="3" fill="rgba(99,102,241,0.12)" stroke="#6366f1" stroke-width="1"/>
<circle cx="368.70" cy="703.33" r="3" fill="rgba(16,185,129,0.05)" stroke="#10b981" stroke-width="1"/>
<circle cx="426.15" cy="710.85" r="3" fill="rgba(16,185,129,0.05)" stroke="#10b981" stroke-width="1"/>
<circle cx="483.59" cy="722.14" r="3" fill="rgba(16,185,129,0.05)" stroke="#10b981" stroke-width="1"/>
<circle cx="541.04" cy="722.14" r="3" fill="rgba(16,185,129,0.05)" stroke="#10b981" stroke-width="1"/>
<circle cx="598.48" cy="722.14" r="3" fill="rgba(16,185,129,0.05)" stroke="#10b981" stroke-width="1"/>
<circle cx="655.93" cy="722.14" r="3" fill="rgba(16,185,129,0.05)" stroke="#10b981" stroke-width="1"/>
<circle cx="713.38" cy="609.27" r="3" fill="rgba(16,185,129,0.05)" stroke="#10b981" stroke-width="1"/>
<circle cx="770.82" cy="635.61" r="3" fill="rgba(16,185,129,0.05)" stroke="#10b981" stroke-width="1"/>
<circle cx="828.27" cy="680.75" r="3" fill="rgba(16,185,129,0.05)" stroke="#10b981" stroke-width="1"/>
<circle cx="885.72" cy="703.33" r="3" fill="rgba(16,185,129,0.05)" stroke="#10b981" stroke-width="1"/>
<circle cx="943.16" cy="710.85" r="3" fill="rgba(16,185,129,0.05)" stroke="#10b981" stroke-width="1"/>
<circle cx="1000.61" cy="722.14" r="3" fill="rgba(16,185,129,0.05)" stroke="#10b981" stroke-width="1"/>
<circle cx="1058.05" cy="707.09" r="3" fill="rgba(16,185,129,0.05)" stroke="#10b981" stroke-width="1"/>
<circle cx="1115.50" cy="722.14" r="3" fill="rgba(16,185,129,0.05)" stroke="#10b981" stroke-width="1"/>
<circle cx="1172.95" cy="707.09" r="3" fill="rgba(16,185,129,0.05)" stroke="#10b981" stroke-width="1"/>
<circle cx="1230.39" cy="695.80" r="3" fill="rgba(16,185,129,0.05)" stroke="#10b981" stroke-width="1"/>
<circle cx="1287.84" cy="710.85" r="3" fill="rgba(16,185,129,0.05)" stroke="#10b981" stroke-width="1"/>
<circle cx="1345.28" cy="710.85" r="3" fill="rgba(16,185,129,0.05)" stroke="#10b981" stroke-width="1"/>
<circle cx="1402.73" cy="710.85" r="3" fill="rgba(16,185,129,0.05)" stroke="#10b981" stroke-width="1"/>
<circle cx="1460.18" cy="718.38" r="3" fill="rgba(16,185,129,0.05)" stroke="#10b981" stroke-width="1"/>
<circle cx="1517.62" cy="718.38" r="3" fill="rgba(16,185,129,0.05)" stroke="#10b981" stroke-width="1"/>
<circle cx="1575.07" cy="714.61" r="3" fill="rgba(16,185,129,0.05)" stroke="#10b981" stroke-width="1"/>
<circle cx="1632.52" cy="714.61" r="3" fill="rgba(16,185,129,0.05)" stroke="#10b981" stroke-width="1"/>
<circle cx="1689.96" cy="722.14" r="3" fill="rgba(16,185,129,0.05)" stroke="#10b981" stroke-width="1"/>
<circle cx="1747.41" cy="722.14" r="3" fill="rgba(16,185,129,0.05)" stroke="#10b981" stroke-width="1"/>
<circle cx="1804.85" cy="714.61" r="3" fill="rgba(16,185,129,0.05)" stroke="#10b981" stroke-width="1"/>
<circle cx="1862.30" cy="718.38" r="3" fill="rgba(16,185,129,0.05)" stroke="#10b981" stroke-width="1"/>
<rect x="1009.5" y="533.5" width="40" height="12" fill="rgba(99,102,241,0.12)" stroke="#6366f1" stroke-width="3"/>
<text x="1055.5" y="538.5" dominant-baseline="central" class="lg">Visites</text>
<rect x="1100.5" y="533.5" width="40" height="12" fill="rgba(16,185,129,0.05)" stroke="#10b981" stroke-width="3" stroke-dasharray="5 5"/>
<text x="1146.5" y="538.5" dominant-baseline="central" class="lg">Uniques</text>
<line x1="348" x2="1063.0" y1="1124.5" y2="1124.5" stroke="#29282c" stroke-width="1"/>
<text x="345.5" y="1123.50" text-anchor="end" dominant-baseline="central" class="tk">0</text>
<line x1="348" x2="1063.0" y1="1085.5" y2="1085.5" stroke="#29282c" stroke-width="1"/>
<text x="345.5" y="1084.90" text-anchor="end" dominant-baseline="central" class="tk">5</text>
<line x1="348" x2="1063.0" y1="1047.5" y2="1047.5" stroke="#29282c" stroke-width="1"/>
<text x="345.5" y="1046.30" text-anchor="end" dominant-baseline="central" class="tk">10</text>
<line x1="348" x2="1063.0" y1="1008.5" y2="1008.5" stroke="#29282c" stroke-width="1"/>
<text x="345.5" y="1007.70" text-anchor="end" dominant-baseline="central" class="tk">15</text>
<line x1="348" x2="1063.0" y1="969.5" y2="969.5" stroke="#29282c" stroke-width="1"/>
<text x="345.5" y="969.10" text-anchor="end" dominant-baseline="central" class="tk">20</text>
<line x1="348" x2="1063.0" y1="931.5" y2="931.5" stroke="#29282c" stroke-width="1"/>
<text x="345.5" y="930.50" text-anchor="end" dominant-baseline="central" class="tk">25</text>
<line x1="356.5" x2="356.5" y1="931.3" y2="1124.3" stroke="#15151f" stroke-width="1"/>
<path d="M360.62 1093.42H381.82V1124.30H360.62Z M361.62 1094.42V1124.30H380.82V1094.42Z" fill="#6366f1" fill-rule="evenodd"/>
<rect x="361.62" y="1094.42" width="19.20" height="29.88" fill="rgba(99,102,241,0.5)"/>
<text x="371.22" y="1141.5" text-anchor="middle" dominant-baseline="central" class="tk">0h</text>
<path d="M390.06 1093.42H411.25V1124.30H390.06Z M391.06 1094.42V1124.30H410.25V1094.42Z" fill="#6366f1" fill-rule="evenodd"/>
<rect x="391.06" y="1094.42" width="19.20" height="29.88" fill="rgba(99,102,241,0.5)"/>
<text x="400.66" y="1141.5" text-anchor="middle" dominant-baseline="central" class="tk">1h</text>
<path d="M419.50 1093.42H440.69V1124.30H419.50Z M420.50 1094.42V1124.30H439.69V1094.42Z" fill="#6366f1" fill-rule="evenodd"/>
<rect x="420.50" y="1094.42" width="19.20" height="29.88" fill="rgba(99,102,241,0.5)"/>
<text x="430.09" y="1141.5" text-anchor="middle" dominant-baseline="central" class="tk">2h</text>
<path d="M448.93 1108.86H470.13V1124.30H448.93Z M449.93 1109.86V1124.30H469.13V1109.86Z" fill="#6366f1" fill-rule="evenodd"/>
<rect x="449.93" y="1109.86" width="19.20" height="14.44" fill="rgba(99,102,241,0.5)"/>
<text x="459.53" y="1141.5" text-anchor="middle" dominant-baseline="central" class="tk">3h</text>
<text x="488.97" y="1141.5" text-anchor="middle" dominant-baseline="central" class="tk">4h</text>
<path d="M507.81 1101.14H529.00V1124.30H507.81Z M508.81 1102.14V1124.30H528.00V1102.14Z" fill="#6366f1" fill-rule="evenodd"/>
<rect x="508.81" y="1102.14" width="19.20" height="22.16" fill="rgba(99,102,241,0.5)"/>
<text x="518.41" y="1141.5" text-anchor="middle" dominant-baseline="central" class="tk">5h</text>
<path d="M537.25 1085.70H558.44V1124.30H537.25Z M538.25 1086.70V1124.30H557.44V1086.70Z" fill="#6366f1" fill-rule="evenodd"/>
<rect x="538.25" y="1086.70" width="19.20" height="37.60" fill="rgba(99,102,241,0.5)"/>
<text x="547.84" y="1141.5" text-anchor="middle" dominant-baseline="central" class="tk">6h</text>
<path d="M566.68 1047.10H587.88V1124.30H566.68Z M567.68 1048.10V1124.30H586.88V1048.10Z" fill="#6366f1" fill-rule="evenodd"/>
<rect x="567.68" y="1048.10" width="19.20" height="76.20" fill="rgba(99,102,241,0.5)"/>
<text x="577.28" y="1141.5" text-anchor="middle" dominant-baseline="central" class="tk">7h</text>
<path d="M596.12 1039.38H617.32V1124.30H596.12Z M597.12 1040.38V1124.30H616.32V1040.38Z" fill="#6366f1" fill-rule="evenodd"/>
<rect x="597.12" y="1040.38" width="19.20" height="83.92" fill="rgba(99,102,241,0.5)"/>
<text x="606.72" y="1141.5" text-anchor="middle" dominant-baseline="central" class="tk">8h</text>
<path d="M625.56 1016.22H646.75V1124.30H625.56Z M626.56 1017.22V1124.30H645.75V1017.22Z" fill="#6366f1" fill-rule="evenodd"/>
<rect x="626.56" y="1017.22" width="19.20" height="107.08" fill="rgba(99,102,241,0.5)"/>
<text x="636.16" y="1141.5" text-anchor="middle" dominant-baseline="central" class="tk">9h</text>
<path d="M655.00 1016.22H676.19V1124.30H655.00Z M656.00 1017.22V1124.30H675.19V1017.22Z" fill="#6366f1" fill-rule="evenodd"/>
<rect x="656.00" y="1017.22" width="19.20" height="107.08" fill="rgba(99,102,241,0.5)"/>
<text x="665.59" y="1141.5" text-anchor="middle" dominant-baseline="central" class="tk">10h</text>
<path d="M684.43 1023.94H705.63V1124.30H684.43Z M685.43 1024.94V1124.30H704.63V1024.94Z" fill="#6366f1" fill-rule="evenodd"/>
<rect x="685.43" y="1024.94" width="19.20" height="99.36" fill="rgba(99,102,241,0.5)"/>
<text x="695.03" y="1141.5" text-anchor="middle" dominant-baseline="central" class="tk">11h</text>
<path d="M713.87 1008.50H735.07V1124.30H713.87Z M714.87 1009.50V1124.30H734.07V1009.50Z" fill="#6366f1" fill-rule="evenodd"/>
<rect x="714.87" y="1009.50" width="19.20" height="114.80" fill="rgba(99,102,241,0.5)"/>
<text x="724.47" y="1141.5" text-anchor="middle" dominant-baseline="central" class="tk">12h</text>
<path d="M743.31 1047.10H764.50V1124.30H743.31Z M744.31 1048.10V1124.30H763.50V1048.10Z" fill="#6366f1" fill-rule="evenodd"/>
<rect x="744.31" y="1048.10" width="19.20" height="76.20" fill="rgba(99,102,241,0.5)"/>
<text x="753.91" y="1141.5" text-anchor="middle" dominant-baseline="central" class="tk">13h</text>
<path d="M772.75 985.34H793.94V1124.30H772.75Z M773.75 986.34V1124.30H792.94V986.34Z" fill="#6366f1" fill-rule="evenodd"/>
<rect x="773.75" y="986.34" width="19.20" height="137.96" fill="rgba(99,102,241,0.5)"/>
<text x="783.34" y="1141.5" text-anchor="middle" dominant-baseline="central" class="tk">14h</text>
<path d="M802.18 977.62H823.38V1124.30H802.18Z M803.18 978.62V1124.30H822.38V978.62Z" fill="#6366f1" fill-rule="evenodd"/>
<rect x="803.18" y="978.62" width="19.20" height="145.68" fill="rgba(99,102,241,0.5)"/>
<text x="812.78" y="1141.5" text-anchor="middle" dominant-baseline="central" class="tk">15h</text>
<path d="M831.62 977.62H852.82V1124.30H831.62Z M832.62 978.62V1124.30H851.82V978.62Z" fill="#6366f1" fill-rule="evenodd"/>
<rect x="832.62" y="978.62" width="19.20" height="145.68" fill="rgba(99,102,241,0.5)"/>
<text x="842.22" y="1141.5" text-anchor="middle" dominant-baseline="central" class="tk">16h</text>
<path d="M861.06 1054.82H882.25V1124.30H861.06Z M862.06 1055.82V1124.30H881.25V1055.82Z" fill="#6366f1" fill-rule="evenodd"/>
<rect x="862.06" y="1055.82" width="19.20" height="68.48" fill="rgba(99,102,241,0.5)"/>
<text x="871.66" y="1141.5" text-anchor="middle" dominant-baseline="central" class="tk">17h</text>
<path d="M890.50 946.74H911.69V1124.30H890.50Z M891.50 947.74V1124.30H910.69V947.74Z" fill="#6366f1" fill-rule="evenodd"/>
<rect x="891.50" y="947.74" width="19.20" height="176.56" fill="rgba(99,102,241,0.5)"/>
<text x="901.09" y="1141.5" text-anchor="middle" dominant-baseline="central" class="tk">18h</text>
<path d="M919.93 1016.22H941.13V1124.30H919.93Z M920.93 1017.22V1124.30H940.13V1017.22Z" fill="#6366f1" fill-rule="evenodd"/>
<rect x="920.93" y="1017.22" width="19.20" height="107.08" fill="rgba(99,102,241,0.5)"/>
<text x="930.53" y="1141.5" text-anchor="middle" dominant-baseline="central" class="tk">19h</text>
<path d="M949.37 1016.22H970.57V1124.30H949.37Z M950.37 1017.22V1124.30H969.57V1017.22Z" fill="#6366f1" fill-rule="evenodd"/>
<rect x="950.37" y="1017.22" width="19.20" height="107.08" fill="rgba(99,102,241,0.5)"/>
<text x="959.97" y="1141.5" text-anchor="middle" dominant-baseline="central" class="tk">20h</text>
<path d="M978.81 1039.38H1000.00V1124.30H978.81Z M979.81 1040.38V1124.30H999.00V1040.38Z" fill="#6366f1" fill-rule="evenodd"/>
<rect x="979.81" y="1040.38" width="19.20" height="83.92" fill="rgba(99,102,241,0.5)"/>
<text x="989.41" y="1141.5" text-anchor="middle" dominant-baseline="central" class="tk">21h</text>
<path d="M1008.25 1054.82H1029.44V1124.30H1008.25Z M1009.25 1055.82V1124.30H1028.44V1055.82Z" fill="#6366f1" fill-rule="evenodd"/>
<rect x="1009.25" y="1055.82" width="19.20" height="68.48" fill="rgba(99,102,241,0.5)"/>
<text x="1018.84" y="1141.5" text-anchor="middle" dominant-baseline="central" class="tk">22h</text>
<path d="M1037.68 1093.42H1058.88V1124.30H1037.68Z M1038.68 1094.42V1124.30H1057.88V1094.42Z" fill="#6366f1" fill-rule="evenodd"/>
<rect x="1038.68" y="1094.42" width="19.20" height="29.88" fill="rgba(99,102,241,0.5)"/>
<text x="1048.28" y="1141.5" text-anchor="middle" dominant-baseline="central" class="tk">23h</text>
<circle cx="1455" cy="1037" r="87" fill="none" stroke="#6366f1" stroke-width="58"/>
<rect x="1784" y="1030.5" width="39" height="12" fill="#6366f1"/>
<text x="1829.5" y="1035.5" dominant-baseline="central" class="lg">Direct</text>
</svg>

<!-- FOOTER -->
<div class="a" style="left:0;top:1250px;width:1905px;height:170px;background:#0b0b14;border-top:1px solid #1f1f2c"></div>
<div class="t" style="left:731px;top:1281px;font-size:19.5px;font-weight:700;color:#6366f1">Radiosoft</div>
<div class="t" style="left:833px;top:1284px;font-size:15px;color:#9a9aae">est un service de</div>
<div class="t" style="left:953px;top:1285px;font-size:14.8px;font-weight:700;color:#fff">SAS Syndication Media Networks</div>
<div class="t" style="left:710px;top:1321px;font-size:14.5px;letter-spacing:-0.35px;color:#a8a8ba">SIREN : 932 114 226</div>
<div class="a" style="left:855.5px;top:1320px;width:1.6px;height:16px;background:#5e5e74"></div>
<div class="t" style="left:875px;top:1321px;font-size:14.8px;letter-spacing:-0.25px;color:#a8a8ba">771 Avenue Marc Lepoutre, 84700 Sorgues - France</div>
<div class="t" style="left:764px;top:1351px;font-size:13.75px;color:#9a9aae">© 2026 SAS Syndication Media Networks - Tous droits réservés.</div>
<div class="t" style="left:789px;top:1380px;font-size:12.8px;font-style:italic;color:#8a8a9e">Licence numéro cus_SU793oVDryN5zV de demo.radiosoft.fr</div>

</div></body></html>
